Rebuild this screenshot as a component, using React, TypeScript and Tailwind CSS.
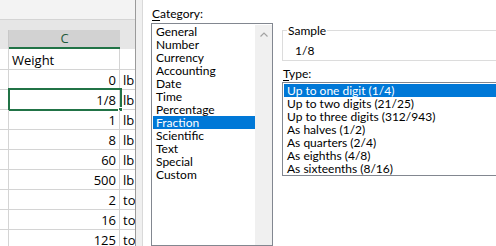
import React from "react";

const rows: { v: string; u: string }[] = [
  { v: "0", u: "lb" },
  { v: "1/8", u: "lb" },
  { v: "1", u: "lb" },
  { v: "8", u: "lb" },
  { v: "60", u: "lb" },
  { v: "500", u: "lb" },
  { v: "2", u: "to" },
  { v: "16", u: "to" },
  { v: "125", u: "to" },
];

const categories = [
  "General",
  "Number",
  "Currency",
  "Accounting",
  "Date",
  "Time",
  "Percentage",
  "Fraction",
  "Scientific",
  "Text",
  "Special",
  "Custom",
];

const types = [
  "Up to one digit (1/4)",
  "Up to two digits (21/25)",
  "Up to three digits (312/943)",
  "As halves (1/2)",
  "As quarters (2/4)",
  "As eighths (4/8)",
  "As sixteenths (8/16)",
];

function Sheet() {
  return (
    <div className="w-[135px] shrink-0 flex flex-col bg-white font-['Open_Sans',sans-serif] text-[13px] text-black">
      <div className="h-[20px] shrink-0 bg-[#f3f3f3] border-b border-[#d4d4d4]" />
      <div className="h-[10px] shrink-0 bg-[#e6e6e6]" />
      <div className="h-[19px] shrink-0 flex bg-[#e6e6e6]">
        <div className="w-[9px] shrink-0 border-r border-[#c8c8c8]" />
        <div className="w-[111px] shrink-0 bg-[#d2d2d2] border-b-2 border-[#217346] flex items-center justify-center text-[#1e5a3a] text-[13px] leading-none">
          C
        </div>
        <div className="flex-1" />
      </div>
      <div className="h-[21px] shrink-0 flex border-b border-[#d4d4d4]">
        <div className="w-[9px] shrink-0 border-r border-[#d4d4d4]" />
        <div className="w-[111px] shrink-0 border-r border-[#d4d4d4] pl-[3px] flex items-end pb-[1px] leading-[16px]">
          Weight
        </div>
        <div className="flex-1" />
      </div>
      {rows.map((r, i) => (
        <div
          key={i}
          className="relative h-[20px] shrink-0 flex border-b border-[#d4d4d4]"
        >
          <div className="w-[9px] shrink-0 border-r border-[#d4d4d4]" />
          <div className="w-[111px] shrink-0 border-r border-[#d4d4d4] pr-[3px] flex items-end justify-end pb-[1px] leading-[16px]">
            {r.v}
          </div>
          <div className="flex-1 overflow-hidden pl-[3px] flex items-end pb-[1px] leading-[16px] whitespace-nowrap">
            {r.u}
          </div>
          {i === 1 && (
            <>
              <div className="absolute left-[8px] top-[-2px] w-[114px] h-[23px] border-2 border-[#217346]" />
              <div className="absolute left-[118px] top-[17px] w-[5px] h-[5px] bg-[#217346] border border-white" />
            </>
          )}
        </div>
      ))}
    </div>
  );
}

function Dialog() {
  return (
    <div className="flex-1 flex min-w-0 font-['Lato',sans-serif] text-[12px] text-black">
      <div className="w-px shrink-0 bg-[#9a9a9a]" />
      <div className="w-[6px] shrink-0 bg-[#f0f0f0]" />
      <div className="w-px shrink-0 bg-[#d9d9d9]" />
      <div className="flex-1 bg-white flex min-w-0 pl-[8px]">
        {/* Category column */}
        <div className="w-[122px] shrink-0 flex flex-col pt-[7px]">
          <div className="h-[16px] leading-[13px] pl-px">
            <span className="underline underline-offset-2">C</span>ategory:
          </div>
          <div className="flex-1 flex border border-[#828790] pl-px pt-px">
            <div className="w-[102px] shrink-0 flex flex-col">
              {categories.map((c) => (
                <div
                  key={c}
                  className={
                    "h-[13px] leading-[13px] pl-[3px] whitespace-nowrap " +
                    (c === "Fraction" ? "bg-[#0078d7] text-white" : "")
                  }
                >
                  {c}
                </div>
              ))}
            </div>
            <div className="w-[17px] shrink-0 bg-[#f0f0f0] flex justify-center pt-[7px]">
              <svg width="8" height="5" viewBox="0 0 8 5">
                <path d="M0.5 4.5 L4 1 L7.5 4.5" fill="none" stroke="#a3a3a3" strokeWidth="1.2" />
              </svg>
            </div>
          </div>
        </div>
        {/* Right column */}
        <div className="flex-1 min-w-0 flex flex-col pl-[9px] pt-[24px]">
          <div className="relative h-[37px] shrink-0">
            <div className="absolute left-0 right-[-4px] top-[6px] bottom-0 border border-[#dcdcdc]" />
            <div className="absolute left-[5px] top-0 px-px bg-white leading-[13px]">
              Sample
            </div>
            <div className="absolute left-[13px] top-[20px] leading-[13px]">1/8</div>
          </div>
          <div className="h-[21px] shrink-0 pt-[6px] pl-px leading-[13px]">
            <span className="underline underline-offset-2">T</span>ype:
          </div>
          <div className="mr-[-4px] border border-[#828790] pt-px pl-px flex flex-col">
            {types.map((t, i) => (
              <div
                key={t}
                className={
                  "h-[13px] leading-[13px] pl-[3px] whitespace-nowrap " +
                  (i === 0 ? "bg-[#0078d7] text-white" : "")
                }
              >
                {t}
              </div>
            ))}
          </div>
        </div>
      </div>
    </div>
  );
}

export default function App() {
  return (
    <div className="w-[496px] h-[246px] overflow-hidden flex bg-white">
      <Sheet />
      <Dialog />
    </div>
  );
}
